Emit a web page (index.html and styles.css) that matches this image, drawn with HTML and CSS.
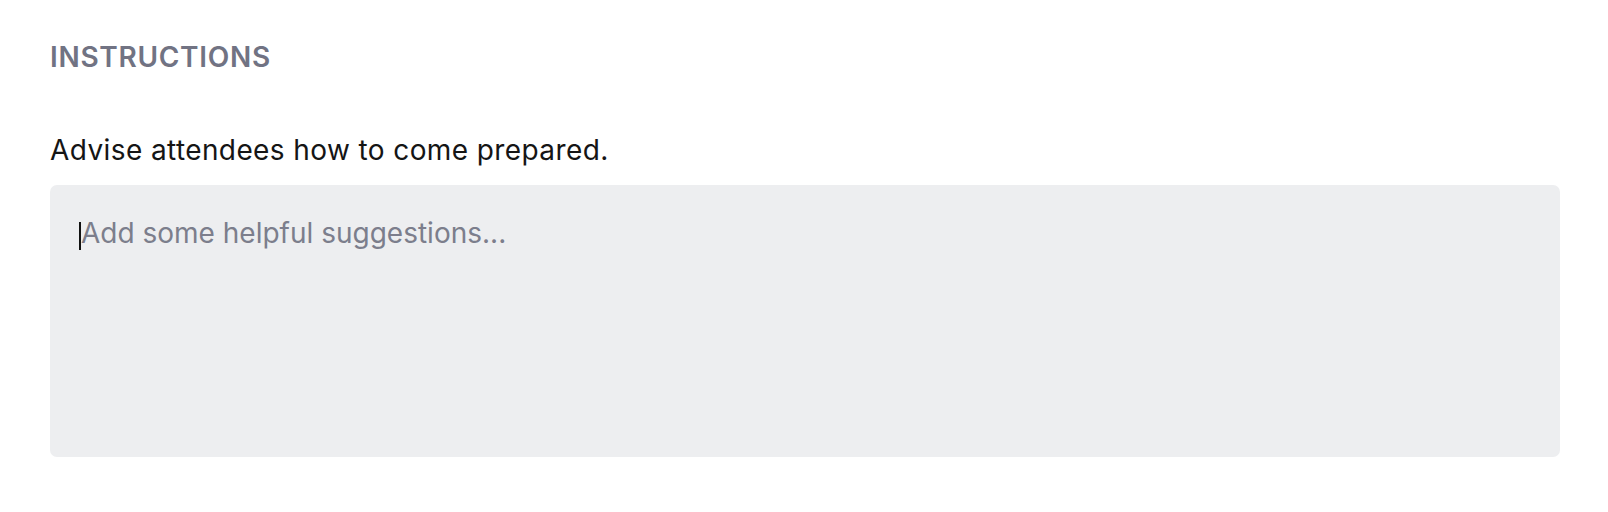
FILE: index.html
```html
<!DOCTYPE html>
<html>
<head>
<meta charset="utf-8">
<link rel="stylesheet" href="styles.css">
</head>
<body>
<section class="section">
  <h2 class="label">INSTRUCTIONS</h2>
  <p class="help">Advise attendees how to come prepared.</p>
  <div class="field">
    <span class="caret"></span><span class="placeholder">Add some helpful suggestions...</span>
  </div>
</section>
</body>
</html>
```
FILE: styles.css
```css
html, body {
  margin: 0;
  padding: 0;
  background: #ffffff;
}
body {
  font-family: Inter, "DejaVu Sans", sans-serif;
}
.section {
  padding: 40px 48px 0 50px;
}
.label {
  margin: 0;
  font-size: 28px;
  font-weight: 600;
  color: #717383;
  line-height: 34px;
  letter-spacing: 0.7px;
}
.help {
  margin: 59px 0 0 0;
  font-size: 28px;
  line-height: 34px;
  letter-spacing: 0.4px;
  color: #151515;
}
.field {
  margin-top: 18px;
  height: 272px;
  background: #edeef0;
  border-radius: 7px;
  box-sizing: border-box;
  padding: 31px 0 0 29px;
  display: flex;
  align-items: flex-start;
}
.caret {
  width: 2px;
  height: 28px;
  margin-top: 6px;
  background: #111111;
  flex: none;
}
.placeholder {
  font-size: 28px;
  line-height: 34px;
  letter-spacing: 0;
  color: #7c7e8c;
}
```
